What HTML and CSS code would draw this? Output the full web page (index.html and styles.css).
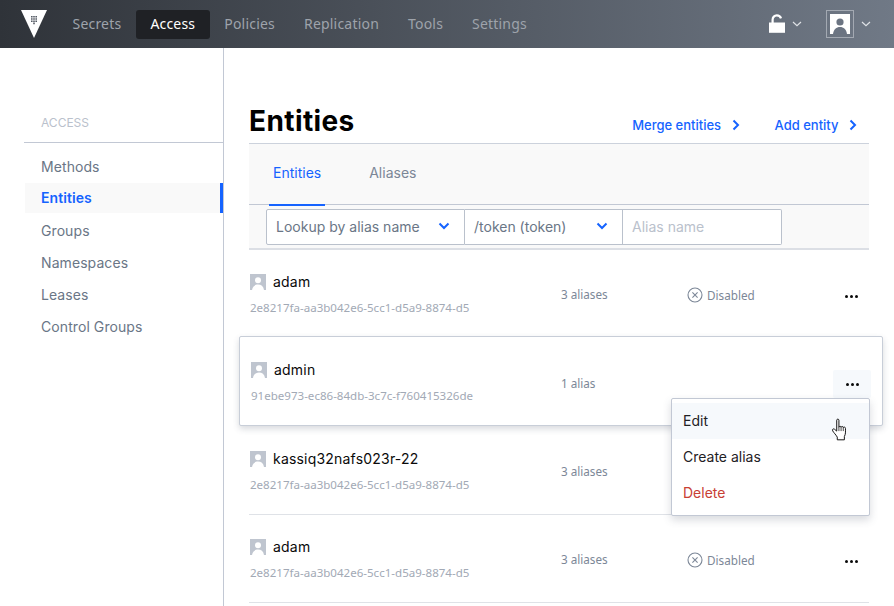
FILE: index.html
```html
<!DOCTYPE html>
<html lang="en">
<head>
    <meta charset="UTF-8">
    <meta name="viewport" content="width=device-width, initial-scale=1.0">
    <title>Entities</title>
    <link rel="stylesheet" href="styles.css">
</head>
<body>
    <header class="topbar">
        <svg class="logo" width="26" height="28" viewBox="0 0 26 28">
            <path fill="#fff" d="M0 0H26L13 28Z"/>
            <path fill="#555b65" d="M10 6h1.600v1.600H10zM12.200 6h1.600v1.600h-1.600zM14.400 6H16v1.600h-1.600zM10 8.200h1.600v1.600H10zM12.200 8.200h1.600v1.600h-1.600zM14.400 8.200H16v1.600h-1.600zM10 10.400h1.600V12H10zM12.200 10.400h1.600V12h-1.600zM14.400 10.400H16V12h-1.600zM12.200 12.600h1.600v1.600h-1.600z"/>
        </svg>
        <nav class="topnav">
            <a href="#">Secrets</a>
            <a href="#" class="active">Access</a>
            <a href="#">Policies</a>
            <a href="#">Replication</a>
            <a href="#">Tools</a>
            <a href="#">Settings</a>
        </nav>
        <div class="topbar-right">
            <svg class="lock" width="17" height="20" viewBox="0 0 17 20">
                <path fill="none" stroke="#fff" stroke-width="2.2" d="M3.6 9V5.8C3.6 3.2 5.4 1.4 7.8 1.4c2 0 3.6 1.2 4.2 3"/>
                <path fill="#fff" d="M0 8.5h16V18.8H0z"/>
            </svg>
            <svg class="caret caret-lock" width="10" height="6" viewBox="0 0 10 6"><path fill="none" stroke="#dfe2e6" stroke-width="1.2" d="M1 1l4 3.6L9 1"/></svg>
            <div class="user-box">
                <svg width="20" height="20" viewBox="0 0 20 20">
                    <path fill="#fff" d="M0 0h20v20H0z"/>
                    <circle fill="#6b7482" cx="10" cy="8" r="3.6"/>
                    <path fill="#6b7482" d="M3 20c.6-4.5 3.4-7 7-7s6.400 2.500 7 7z"/>
                </svg>
            </div>
            <svg class="caret" width="10" height="6" viewBox="0 0 10 6"><path fill="none" stroke="#dfe2e6" stroke-width="1.2" d="M1 1l4 3.6L9 1"/></svg>
        </div>
    </header>

    <div class="layout">
        <aside class="sidebar">
            <div class="sidebar-label">ACCESS</div>
            <ul class="sidebar-list">
                <li>Methods</li>
                <li class="active">Entities</li>
                <li>Groups</li>
                <li>Namespaces</li>
                <li>Leases</li>
                <li>Control Groups</li>
            </ul>
        </aside>

        <main class="content">
            <div class="page-head">
                <h1>Entities</h1>
                <div class="page-actions">
                    <a href="#">Merge entities <svg width="8" height="12" viewBox="0 0 8 12"><path fill="none" stroke="#1563ff" stroke-width="2" d="M1.500 1.500L6 6l-4.500 4.500"/></svg></a>
                    <a href="#">Add entity <svg width="8" height="12" viewBox="0 0 8 12"><path fill="none" stroke="#1563ff" stroke-width="2" d="M1.500 1.500L6 6l-4.500 4.500"/></svg></a>
                </div>
            </div>

            <div class="tabs">
                <a href="#" class="tab active">Entities</a>
                <a href="#" class="tab">Aliases</a>
            </div>

            <div class="toolbar">
                <div class="field field-type">Lookup by alias name <svg width="12" height="8" viewBox="0 0 12 8"><path fill="none" stroke="#1563ff" stroke-width="2" d="M1.500 1.500L6 6l4.500-4.500"/></svg></div>
                <div class="field field-mount">/token (token) <svg width="12" height="8" viewBox="0 0 12 8"><path fill="none" stroke="#1563ff" stroke-width="2" d="M1.500 1.500L6 6l4.500-4.500"/></svg></div>
                <div class="field field-input">Alias name</div>
            </div>

            <div class="row">
                <div class="row-main">
                    <div class="row-name"><svg class="avatar" viewBox="0 0 16 16"><path fill="#bfc5cf" d="M0 0h16v16H0z"/><circle fill="#fff" cx="8" cy="6.300" r="3"/><path fill="#fff" d="M2 16c.5-3.600 3-5.400 6-5.400s5.500 1.800 6 5.400z"/></svg>adam</div>
                    <div class="row-id">2e8217fa-aa3b042e6-5cc1-d5a9-8874-d5</div>
                </div>
                <div class="row-count">3 aliases</div>
                <div class="row-status"><svg width="16" height="16" viewBox="0 0 16 16"><circle fill="none" stroke="#7c8797" stroke-width="1.100" cx="8" cy="8" r="7"/><path fill="none" stroke="#7c8797" stroke-width="1.100" d="M5.400 5.400l5.200 5.200M10.600 5.400l-5.200 5.200"/></svg>Disabled</div>
                <div class="row-menu"><span></span><span></span><span></span></div>
            </div>

            <div class="row row-hover">
                <div class="row-main">
                    <div class="row-name"><svg class="avatar" viewBox="0 0 16 16"><path fill="#bfc5cf" d="M0 0h16v16H0z"/><circle fill="#fff" cx="8" cy="6.300" r="3"/><path fill="#fff" d="M2 16c.5-3.600 3-5.400 6-5.400s5.500 1.800 6 5.400z"/></svg>admin</div>
                    <div class="row-id">91ebe973-ec86-84db-3c7c-f760415326de</div>
                </div>
                <div class="row-count">1 alias</div>
                <div class="row-status"></div>
                <div class="row-menu open"><span></span><span></span><span></span></div>
                <ul class="dropdown">
                    <li class="hover">Edit</li>
                    <li>Create alias</li>
                    <li class="danger">Delete</li>
                </ul>
                <svg class="pointer" width="18" height="24" viewBox="0 0 16 22">
                    <path fill="#fff" stroke="#111" stroke-width=".9" stroke-linejoin="round" d="M5 2c0-1.300 2-1.300 2 0v6.500c.2-1.200 2-1.200 2 0 .3-1 2-1 2 .3.400-.8 2-.6 2 .7 0 3.500.3 5-1 7.500v3H5.500v-2.500C4 15 2.500 13.800 1.300 11.800c-.8-1.400.7-2.400 1.700-1.500L5 12z"/>
                    <path fill="none" stroke="#111" stroke-width=".7" d="M7 8.500V12M9 8.500V12M11 8.800V12"/>
                </svg>
            </div>

            <div class="row">
                <div class="row-main">
                    <div class="row-name"><svg class="avatar" viewBox="0 0 16 16"><path fill="#bfc5cf" d="M0 0h16v16H0z"/><circle fill="#fff" cx="8" cy="6.300" r="3"/><path fill="#fff" d="M2 16c.5-3.600 3-5.400 6-5.400s5.500 1.800 6 5.400z"/></svg>kassiq32nafs023r-22</div>
                    <div class="row-id">2e8217fa-aa3b042e6-5cc1-d5a9-8874-d5</div>
                </div>
                <div class="row-count">3 aliases</div>
                <div class="row-status"></div>
                <div class="row-menu"></div>
            </div>

            <div class="row">
                <div class="row-main">
                    <div class="row-name"><svg class="avatar" viewBox="0 0 16 16"><path fill="#bfc5cf" d="M0 0h16v16H0z"/><circle fill="#fff" cx="8" cy="6.300" r="3"/><path fill="#fff" d="M2 16c.5-3.600 3-5.400 6-5.400s5.500 1.800 6 5.400z"/></svg>adam</div>
                    <div class="row-id">2e8217fa-aa3b042e6-5cc1-d5a9-8874-d5</div>
                </div>
                <div class="row-count">3 aliases</div>
                <div class="row-status"><svg width="16" height="16" viewBox="0 0 16 16"><circle fill="none" stroke="#7c8797" stroke-width="1.100" cx="8" cy="8" r="7"/><path fill="none" stroke="#7c8797" stroke-width="1.100" d="M5.400 5.400l5.200 5.200M10.600 5.400l-5.200 5.200"/></svg>Disabled</div>
                <div class="row-menu"><span></span><span></span><span></span></div>
            </div>
        </main>
    </div>
</body>
</html>
```

FILE: styles.css
```css
html, body {
    height: 100%;
}
body {
    margin: 0;
    overflow: hidden;
    background: #fff;
    font-family: Inter, "Liberation Sans", sans-serif;
    font-size: 14px;
    color: #0a0a0a;
}
a {
    text-decoration: none;
}
ul {
    list-style: none;
    margin: 0;
    padding: 0;
}

/* top bar */
.topbar {
    height: 48px;
    display: flex;
    align-items: center;
    padding-left: 21px;
    padding-right: 23px;
    background: linear-gradient(to right, #2f3339, #707986);
    box-sizing: border-box;
}
.logo {
    flex: none;
    margin-right: 11px;
}
.topnav {
    display: flex;
    font-family: "Noto Sans", sans-serif;
    font-size: 14px;
    letter-spacing: .2px;
}
.topnav a {
    color: #9ea3ab;
    height: 29px;
    line-height: 27px;
    padding: 0 14.500px;
    border-radius: 3px;
}
.topnav a.active {
    background: #1f2125;
    color: #fff;
}
.topbar-right {
    margin-left: auto;
    display: flex;
    align-items: center;
}
.lock {
    margin-right: 6px;
}
.caret-lock {
    margin-right: 24px;
}
.user-box {
    width: 28px;
    height: 28px;
    box-sizing: border-box;
    border: 1px solid #a3a9b2;
    padding: 3px;
    margin-right: 7px;
}
.user-box svg {
    display: block;
}

/* sidebar */
.layout {
    display: flex;
    height: 558px;
}
.sidebar {
    width: 224px;
    flex: none;
    box-sizing: border-box;
    border-right: 1px solid #c2c8d4;
    padding: 67px 0 0 24px;
}
.sidebar-label {
    font-size: 12px;
    color: #bac1cc;
    padding: 1px 0 12px 17px;
    line-height: 14px;
    border-bottom: 1px solid #c2c8d4;
}
.sidebar-list {
    margin-top: 8px;
}
.sidebar-list li {
    height: 32px;
    line-height: 32px;
    padding-left: 17px;
    color: #6a7686;
    font-size: 14px;
    letter-spacing: .08px;
}
.sidebar-list li.active {
    margin-left: 1px;
    padding-left: 16px;
    height: 30px;
    line-height: 30px;
    margin-bottom: 2px;
    background: #f9f9f9;
    color: #1563ff;
    font-weight: 600;
    box-shadow: inset -3px 0 0 #1563ff;
}

/* main */
.content {
    flex: 1;
    padding: 0 25px;
    min-width: 0;
}
.page-head {
    height: 95px;
    box-sizing: border-box;
    padding-top: 57px;
    display: flex;
    justify-content: space-between;
    align-items: flex-start;
}
.page-head h1 {
    margin: 0;
    font-size: 28px;
    line-height: 32px;
    font-weight: 700;
    letter-spacing: .4px;
    color: #000;
}
.page-actions {
    display: flex;
    gap: 35px;
    padding: 11px 12px 0 0;
}
.page-actions a {
    color: #1563ff;
    font-size: 13px;
    font-weight: 500;
    line-height: 18px;
}
.page-actions svg {
    margin-left: 7px;
    vertical-align: -1px;
}
.tabs {
    height: 62px;
    box-sizing: border-box;
    background: #f9f9f9;
    border-top: 1px solid #ccd2dc;
    border-bottom: 1px solid #c2c8d4;
    display: flex;
    padding-left: 20px;
    gap: 40px;
}
.tab {
    height: 62px;
    box-sizing: border-box;
    padding: 0 4px;
    line-height: 58px;
    font-size: 14px;
    color: #7c8797;
    min-width: 56px;
}
.tab.active {
    color: #1563ff;
    border-bottom: 2px solid #1563ff;
}
.toolbar {
    height: 45px;
    box-sizing: border-box;
    background: #f9f9f9;
    border-bottom: 2px solid #dcdfe5;
    padding: 4px 0 0 17px;
    display: flex;
    align-items: flex-start;
}
.field {
    height: 36px;
    box-sizing: border-box;
    background: #fff;
    border: 1px solid #bac1cc;
    border-left: 0;
    display: flex;
    align-items: center;
    justify-content: space-between;
    padding: 0 14px 2px 9px;
    font-size: 14px;
    color: #6a7686;
    white-space: nowrap;
}
.field-type {
    width: 199px;
    border-left: 1px solid #bac1cc;
    border-radius: 2px 0 0 2px;
}
.field-mount {
    width: 158px;
}
.field-input {
    width: 159px;
    color: #bac1cc;
    border-radius: 0 2px 2px 0;
}

/* rows */
.row {
    height: 88px;
    box-sizing: border-box;
    display: flex;
    position: relative;
    border-bottom: 1px solid #dfe2e7;
    padding-top: 24px;
}
.row-main {
    width: 311px;
    flex: none;
    padding-left: 1px;
}
.row-name {
    display: flex;
    align-items: flex-start;
    font-size: 14px;
    letter-spacing: .2px;
    line-height: 15px;
    height: 16px;
    color: #0a0a0a;
}
.avatar {
    width: 16px;
    height: 16px;
    margin-right: 7px;
    flex: none;
}
.row-id {
    font-family: "Noto Sans", sans-serif;
    font-size: 11.550px;
    color: #a2a9b5;
    margin-top: 10px;
    line-height: 16px;
}
.row-count {
    width: 126px;
    flex: none;
    font-family: "Noto Sans", sans-serif;
    font-size: 11.700px;
    color: #7c8797;
    line-height: 16px;
    padding-top: 12px;
}
.row-status {
    width: 146px;
    flex: none;
    display: flex;
    align-items: flex-start;
    gap: 4px;
    font-family: "Noto Sans", sans-serif;
    font-size: 11.700px;
    color: #7c8797;
    line-height: 16px;
    padding-top: 13px;
}
.row-menu {
    width: 36px;
    height: 28px;
    margin-top: 8px;
    flex: none;
    display: flex;
    justify-content: center;
    align-items: center;
    gap: 2px;
    border-radius: 2px;
}
.row-menu span {
    width: 3px;
    height: 3px;
    background: #0a0a0a;
    border-radius: 50%;
}
.row-menu.open {
    width: 38px;
    background: #f6f9fc;
}
.row-hover {
    margin: -2px -14px 1px -10px;
    height: 90px;
    padding: 25px 11px 0 11px;
    background: #fff;
    border: 1px solid #c8ced8;
    border-radius: 2px;
    box-shadow: 0 3px 6px rgba(60, 70, 90, .2);
    z-index: 1;
}
.row-hover .row-main {
    width: 310px;
    padding-left: 0;
}
.row-hover .row-count {
    padding-top: 13px;
}

/* dropdown menu */
.dropdown {
    position: absolute;
    top: 61px;
    right: 12px;
    width: 199px;
    height: 118px;
    box-sizing: border-box;
    padding-top: 4px;
    background: #fff;
    border: 1px solid #c2c8d4;
    border-radius: 2px;
    box-shadow: 0 4px 8px rgba(60, 70, 90, .2);
    z-index: 2;
}
.dropdown li {
    height: 36px;
    line-height: 36px;
    padding-left: 11px;
    font-size: 14px;
    color: #1f2125;
}
.dropdown li.hover {
    background: #f6f9fc;
}
.dropdown li.danger {
    color: #c84034;
}
.pointer {
    position: absolute;
    top: 81px;
    right: 33px;
    z-index: 3;
}
```
